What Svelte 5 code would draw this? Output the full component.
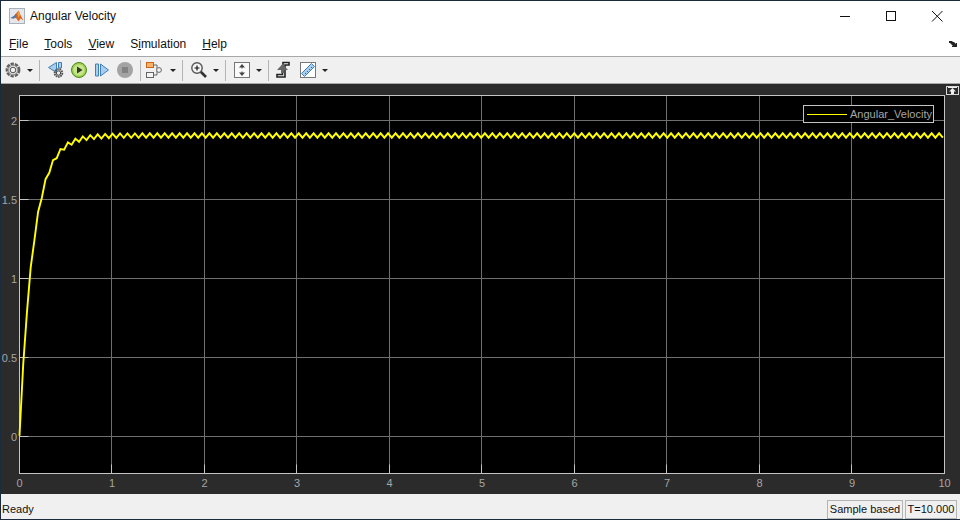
<script>
    // axes geometry of the scope, in svg pixels
    const left = 18.5;
    const right = 943.5;
    const top = 11.5;
    const bottom = 389.5;
    const xUnit = (right - left) / 10;
    const yZero = 352;
    const yUnit = 158;
    const period = 0.0805;

    const xTicks = [0, 1, 2, 3, 4, 5, 6, 7, 8, 9, 10];
    const yTicks = [0, 0.5, 1, 1.5, 2];

    const px = (t) => left + t * xUnit;
    const py = (v) => yZero - v * yUnit;
    const gridX = (t) => Math.floor(px(t) - 0.5) + 0.5;

    function signal() {
        const pts = [];
        const steps = Math.floor(10 / (period / 2));
        for (let k = 0; k <= steps; k++) {
            const t = (k * period) / 2;
            const rise = 1.9 * (1 - Math.exp(-t / 0.15));
            const ripple = (k % 2 ? 0.014 : -0.014) * Math.min(1, t * 8);
            pts.push(px(t).toFixed(2) + "," + py(rise + ripple + 0.002).toFixed(2));
        }
        return pts.join(" ");
    }

    const line = signal();
</script>

<div class="window">
    <header class="titlebar">
        <svg class="logo" width="16" height="16" viewBox="0 0 16 16">
            <rect x="0.5" y="0.5" width="15" height="15" fill="#e4e8ee" stroke="#a9b0ba" />
            <path d="M1.5 10 L5 8 L7 5.5 L9.5 2.5 L12 8 L14.5 12.5 L11.5 10.5 L9.5 13.5 L7 10 L4.5 10.5 Z" fill="#e2661d" />
            <path d="M1.5 10 L5 8 L7 5.5 L7.5 9 L4.5 10.5 Z" fill="#3f7fbf" />
            <path d="M9.5 2.5 L11 6.5 L9.5 10 L8.5 6 Z" fill="#f2a13a" />
        </svg>
        <span class="title">Angular Velocity</span>
        <div class="winbtns">
            <svg width="46" height="31" viewBox="0 0 46 31"><path d="M18 15.5 H28" stroke="#111" /></svg>
            <svg width="46" height="31" viewBox="0 0 46 31"><rect x="18.5" y="10.5" width="9" height="9" fill="none" stroke="#111" /></svg>
            <svg width="46" height="31" viewBox="0 0 46 31"><path d="M18 10 L28.5 20.5 M28.5 10 L18 20.5" stroke="#111" /></svg>
        </div>
    </header>

    <nav class="menubar">
        <span class="menu"><u>F</u>ile</span>
        <span class="menu"><u>T</u>ools</span>
        <span class="menu"><u>V</u>iew</span>
        <span class="menu">S<u>i</u>mulation</span>
        <span class="menu"><u>H</u>elp</span>
        <svg class="dock" width="9" height="7" viewBox="0 0 9 7"><path d="M0 0 H3 L4 1 H5 L6 2 V3 L7 2 L8 2 V6 H3 L3 5 L4 4 L3 4 L1 2 H0 Z" fill="#222" /></svg>
    </nav>

    <div class="toolbar">
        <span class="tool">
            <svg width="18" height="18" viewBox="0 0 18 18">
                <circle cx="9" cy="9" r="6" fill="none" stroke="#5f5f5f" stroke-width="2.8" stroke-dasharray="3.2 1" />
                <circle cx="9" cy="9" r="4.6" fill="none" stroke="#9c9c9c" stroke-width="1.4" />
                <circle cx="9" cy="9" r="2.8" fill="#f0f0f0" stroke="#505050" />
            </svg>
        </span>
        <span class="caret"></span>
        <span class="sep"></span>

        <span class="tool">
            <svg width="20" height="20" viewBox="0 0 20 20">
                <path d="M10.5 2.5 V12.5 L2.5 7.5 Z" fill="#a9cdea" stroke="#3f7fb8" />
                <path d="M12.5 2.5 H15.5 V8 H12.5 Z" fill="#a9cdea" stroke="#3f7fb8" />
                <circle cx="12.5" cy="13" r="3.8" fill="none" stroke="#555" stroke-width="2" stroke-dasharray="1.6 0.7" />
                <circle cx="12.5" cy="13" r="2.2" fill="#eee" stroke="#444" />
            </svg>
        </span>
        <span class="tool">
            <svg width="18" height="18" viewBox="0 0 18 18">
                <circle cx="9" cy="9" r="7.5" fill="#9fd04e" stroke="#4c8a22" />
                <circle cx="9" cy="9" r="5.6" fill="#c6e58c" />
                <path d="M7 5.5 L12.5 9 L7 12.5 Z" fill="#2f3a22" />
            </svg>
        </span>
        <span class="tool">
            <svg width="18" height="18" viewBox="0 0 18 18">
                <path d="M2.5 3 H5.5 V15 H2.5 Z" fill="#a9cdea" stroke="#3f7fb8" />
                <path d="M7.5 3 L15.5 9 L7.5 15 Z" fill="#a9cdea" stroke="#3f7fb8" />
            </svg>
        </span>
        <span class="tool">
            <svg width="18" height="18" viewBox="0 0 18 18">
                <circle cx="9" cy="9" r="8" fill="#a3a3a3" />
                <rect x="6" y="6" width="6" height="6" fill="#828282" />
            </svg>
        </span>
        <span class="sep near"></span>

        <span class="tool wide">
            <svg width="20" height="18" viewBox="0 0 20 18">
                <rect x="1.5" y="1.5" width="7" height="5" fill="#f6b26b" stroke="#c8651b" />
                <rect x="1.5" y="11.5" width="7" height="5" fill="#f4f4f4" stroke="#666" />
                <path d="M8.5 4 H12 V8 M8.5 14 H12 V10" fill="none" stroke="#666" />
                <circle cx="14" cy="9" r="2.4" fill="#f4f4f4" stroke="#666" />
            </svg>
        </span>
        <span class="caret"></span>
        <span class="sep"></span>

        <span class="tool">
            <svg width="18" height="18" viewBox="0 0 18 18">
                <path d="M10.5 10.5 L16 16" stroke="#333" stroke-width="2.6" />
                <circle cx="7" cy="7" r="5.2" fill="#f6f6f6" stroke="#555" stroke-width="1.4" />
                <path d="M4.5 7 H9.5 M7 4.5 V9.5" stroke="#111" stroke-width="1.2" />
            </svg>
        </span>
        <span class="caret"></span>
        <span class="sep"></span>

        <span class="tool">
            <svg width="18" height="18" viewBox="0 0 18 18">
                <rect x="1.5" y="1.5" width="15" height="15" fill="#fafafa" stroke="#777" />
                <path d="M9 3 L12 6.5 H6 Z M9 15 L12 11.5 H6 Z" fill="#444" />
                <path d="M9 6 V7.5 M9 10.5 V12" stroke="#444" />
            </svg>
        </span>
        <span class="caret"></span>
        <span class="sep"></span>

        <span class="tool shift">
            <svg width="18" height="18" viewBox="0 0 18 18">
                <path d="M9 1.5 H15 V4 H11 V16 H3 V13.5 H8.5 Z" fill="none" stroke="#222" stroke-width="1.6" />
                <path d="M8.5 3 L14 9 H3 Z" fill="#666" />
                <path d="M7 9 V12 H10 V9 Z" fill="#666" />
            </svg>
        </span>
        <span class="tool">
            <svg width="18" height="18" viewBox="0 0 18 18">
                <rect x="1.5" y="1.5" width="15" height="15" fill="#fff" stroke="#777" />
                <path d="M2.5 12.5 L12.5 2.5 L15.5 5.5 L5.5 15.5 Z" fill="#a9cdea" stroke="#3f7fb8" />
                <path d="M6 12 L7 13 M8 10 L9 11 M10 8 L11 9 M12 6 L13 7" stroke="#2f6c9f" />
            </svg>
        </span>
        <span class="caret"></span>
    </div>

    <main class="scope">
        <svg class="plot" width="959" height="410" viewBox="0 0 959 410">
            <rect x={left} y={top} width={right - left} height={bottom - top} fill="#000" />

            {#each xTicks as t}
                <path d="M{gridX(t)} {top} V{bottom}" stroke="#6f6f6f" />
                <path d="M{gridX(t)} {bottom} v-9" stroke="#c4c4c4" />
                <text class="tick" x={px(t)} y="403" text-anchor="middle">{t}</text>
            {/each}
            {#each yTicks as v}
                <path d="M{left} {py(v) + 0.5} H{right}" stroke="#6f6f6f" />
                <path d="M{left} {py(v) + 0.5} h9" stroke="#c4c4c4" />
                <text class="tick" x="16" y={py(v) + 4.5} text-anchor="end">{v}</text>
            {/each}

            <rect x={left} y={top} width={right - left} height={bottom - top} fill="none" stroke="#c4c4c4" />
            <polyline points={line} fill="none" stroke="#ffff00" stroke-width="1.9" stroke-linejoin="miter" />

            <rect class="popout" x="945.5" y="2.5" width="12" height="8" />
            <path d="M951.5 4 L955 7.5 H953 V10 H950 V7.5 H948 Z" fill="#eee" />
            <path d="M947 3.5 H956" stroke="#eee" />
        </svg>

        <div class="legend">
            <span class="swatch"></span>
            <span class="legend-label">Angular_Velocity</span>
        </div>
    </main>

    <footer class="statusbar">
        <span class="ready">Ready</span>
        <span class="cell sample">Sample based</span>
        <span class="cell time">T=10.000</span>
    </footer>
</div>

<style>
    :global(body) {
        background: #1b2a3c;
    }

    .window {
        width: 960px;
        height: 520px;
        box-sizing: border-box;
        border-top: 1px solid #1b2a3c;
        border-left: 1px solid #1b2a3c;
        border-bottom: 1px solid #1b2a3c;
        display: flex;
        flex-direction: column;
        font-family: "Liberation Sans", sans-serif;
        font-size: 12px;
        color: #111;
        overflow: hidden;
    }

    .titlebar {
        height: 30px;
        background: #fff;
        display: flex;
        align-items: center;
        padding-left: 8px;
    }

    .logo {
        flex: none;
    }

    .title {
        margin-left: 5px;
    }

    .winbtns {
        margin-left: auto;
        display: flex;
        align-self: flex-start;
    }

    .menubar {
        height: 25px;
        background: #fff;
        display: flex;
        align-items: center;
        padding-left: 8px;
        gap: 16px;
    }

    .dock {
        margin-left: auto;
        margin-right: 2px;
        margin-top: 1px;
    }

    .toolbar {
        height: 28px;
        box-sizing: border-box;
        background: #f0f0f0;
        border-top: 1px solid #a8a8a8;
        border-bottom: 1px solid #a8a8a8;
        display: flex;
        align-items: center;
    }

    .tool {
        flex: none;
        width: 23px;
        height: 20px;
        display: flex;
        align-items: center;
        justify-content: center;
    }

    .tool.wide {
        width: 25px;
    }

    .tool.shift svg {
        margin-right: 3px;
    }

    .caret {
        flex: none;
        width: 10px;
        margin-left: 1px;
        display: flex;
        justify-content: center;
    }

    .caret::before {
        content: "";
        border-left: 3px solid transparent;
        border-right: 3px solid transparent;
        border-top: 3px solid #222;
    }

    .sep {
        flex: none;
        width: 1px;
        height: 21px;
        background: #b5b5b5;
        margin: 0 4px;
    }

    .sep.near {
        margin-right: 1px;
    }

    .scope {
        height: 410px;
        flex: none;
        background: #2b2b2b;
        position: relative;
    }

    .plot {
        display: block;
    }

    .tick {
        font-family: "Liberation Sans", sans-serif;
        font-size: 11px;
        fill: #a6a6a6;
    }

    .popout {
        fill: #2b2b2b;
        stroke: #d8d8d8;
    }

    .legend {
        position: absolute;
        left: 802px;
        top: 21px;
        width: 126px;
        height: 16px;
        border: 1px solid #c4c4c4;
        background: #000;
        display: flex;
        align-items: center;
        padding-left: 3px;
    }

    .swatch {
        flex: none;
        width: 40px;
        height: 1px;
        background: #ffff00;
    }

    .legend-label {
        margin-left: 3px;
        font-size: 11px;
        color: #a6a6a6;
        white-space: nowrap;
    }

    .statusbar {
        flex: 1;
        box-sizing: border-box;
        background: #f0f0f0;
        display: flex;
        align-items: center;
        padding: 5px 3px 0 0;
        font-size: 11px;
    }

    .ready {
        margin-left: 1px;
        margin-right: auto;
    }

    .cell {
        height: 19px;
        box-sizing: border-box;
        border: 1px solid #b4b4b4;
        display: flex;
        align-items: center;
        justify-content: center;
        white-space: nowrap;
    }

    .sample {
        width: 76px;
    }

    .time {
        width: 52px;
        margin-left: 2px;
    }
</style>
